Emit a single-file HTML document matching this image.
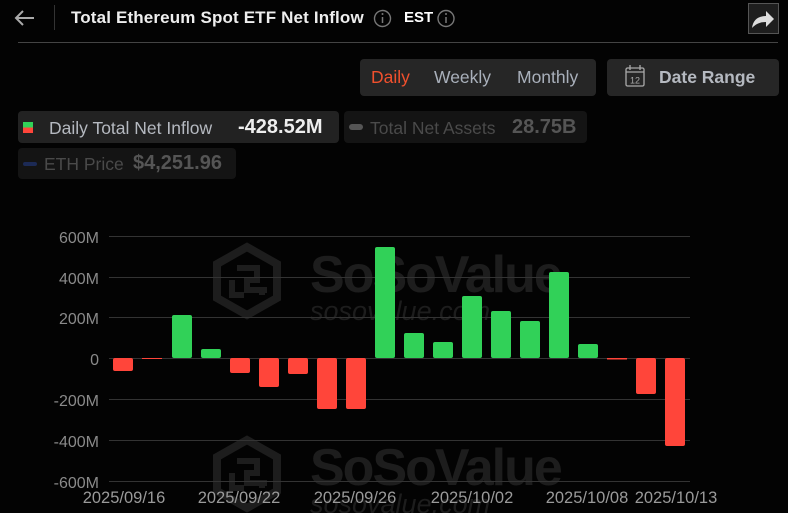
<!DOCTYPE html>
<html><head><meta charset="utf-8"><style>
*{margin:0;padding:0;box-sizing:border-box}
body{width:788px;height:513px;background:#030303;font-family:"Liberation Sans",sans-serif;position:relative;overflow:hidden;color:#ccc}
.a{position:absolute;white-space:nowrap}
</style></head><body>
<svg class="a" style="left:0;top:0" width="788" height="513">
<path d="M34 18H16M23 11l-7 7 7 7" stroke="#aaa" stroke-width="2" fill="none"/>
<line x1="54.5" y1="5" x2="54.5" y2="30" stroke="#333"/>
<circle cx="382.5" cy="18.5" r="8" stroke="#777" stroke-width="1.4" fill="none"/>
<line x1="382.5" y1="17" x2="382.5" y2="23" stroke="#777" stroke-width="1.5"/><circle cx="382.5" cy="14" r="1" fill="#777"/>
<circle cx="446" cy="18.5" r="8" stroke="#777" stroke-width="1.4" fill="none"/>
<line x1="446" y1="17" x2="446" y2="23" stroke="#777" stroke-width="1.5"/><circle cx="446" cy="14" r="1" fill="#777"/>
<rect x="748.5" y="3.5" width="30" height="30" fill="#1e1e1e" stroke="#555"/>
<path d="M752 28c1-8 6-12 14-12v-5l8 8-8 8v-5c-6 0-10 2-14 6z" fill="#ddd"/>
<line x1="18" y1="42.5" x2="778" y2="42.5" stroke="#444"/>
<rect x="360" y="59" width="236" height="37" rx="4" fill="#262626"/>
<rect x="607" y="59" width="172" height="37" rx="4" fill="#262626"/>
<rect x="626" y="68" width="18" height="18" rx="1.5" fill="none" stroke="#aaa" stroke-width="1.3"/>
<line x1="626" y1="72" x2="644" y2="72" stroke="#aaa" stroke-width="1.3"/>
<line x1="630" y1="65" x2="630" y2="70" stroke="#aaa" stroke-width="1.3"/><line x1="640" y1="65" x2="640" y2="70" stroke="#aaa" stroke-width="1.3"/>
<text x="635" y="83.5" font-size="9" fill="#aaa" text-anchor="middle" font-family="Liberation Sans">12</text>
<rect x="18" y="111" width="321" height="32" rx="4" fill="#222"/>
<rect x="23" y="122" width="10" height="5.5" fill="#31d158"/><rect x="23" y="127.5" width="10" height="5.5" fill="#ff453a"/>
<rect x="344" y="111" width="243" height="32" rx="4" fill="#141414"/>
<rect x="349" y="124" width="14" height="6" rx="3" fill="#555"/>
<rect x="18" y="148" width="218" height="31" rx="4" fill="#141414"/>
<rect x="23" y="162" width="14" height="4" rx="2" fill="#1c2a55"/>
<g fill="none" stroke="#1d1d1d" stroke-width="8">
<path d="M247 247l30 17v34l-30 17-30-17v-34z"/>
<path d="M247 440l30 17v34l-30 17-30-17v-34z"/>
</g>
<g fill="none" stroke="#1d1d1d" stroke-width="6">
<path d="M237 268h20v12h-10v10h20M232 280v15h12M262 295v-8"/>
<path d="M237 461h20v12h-10v10h20M232 473v15h12M262 488v-8"/>
</g>
<g font-family="Liberation Sans" fill="#1d1d1d">
<text x="310" y="292" font-size="52" font-weight="bold" letter-spacing="-2">SoSoValue</text>
<text x="310" y="320" font-size="27" font-style="italic">sosovalue.com</text>
<text x="310" y="485" font-size="52" font-weight="bold" letter-spacing="-2">SoSoValue</text>
<text x="310" y="513" font-size="27" font-style="italic">sosovalue.com</text>
</g>
<g stroke="#333" stroke-width="1">
<line x1="109" y1="236.5" x2="690" y2="236.5"/><line x1="109" y1="277.5" x2="690" y2="277.5"/>
<line x1="109" y1="317.5" x2="690" y2="317.5"/><line x1="109" y1="358.5" x2="690" y2="358.5"/>
<line x1="109" y1="399.5" x2="690" y2="399.5"/><line x1="109" y1="440.5" x2="690" y2="440.5"/>
<line x1="109" y1="481.5" x2="690" y2="481.5"/>
</g>
<g font-family="Liberation Sans" font-size="16" fill="#8a8a8a" text-anchor="end">
<text x="99" y="243">600M</text><text x="99" y="284">400M</text><text x="99" y="324">200M</text>
<text x="99" y="365">0</text><text x="99" y="406">-200M</text><text x="99" y="447">-400M</text><text x="99" y="488">-600M</text>
</g>
<g font-family="Liberation Sans" font-size="16.5" fill="#9a9a9a" text-anchor="middle">
<text x="124" y="503">2025/09/16</text><text x="239" y="503">2025/09/22</text><text x="355" y="503">2025/09/26</text>
<text x="472" y="503">2025/10/02</text><text x="587" y="503">2025/10/08</text><text x="676" y="503">2025/10/13</text>
</g>
<g fill="#31d158">
<rect x="172" y="315" width="20" height="43" rx="2"/>
<rect x="201" y="349" width="20" height="9" rx="2"/>
<rect x="375" y="247" width="20" height="111" rx="2"/>
<rect x="404" y="333" width="20" height="25" rx="2"/>
<rect x="433" y="342" width="20" height="16" rx="2"/>
<rect x="462" y="296" width="20" height="62" rx="2"/>
<rect x="491" y="311" width="20" height="47" rx="2"/>
<rect x="520" y="321" width="20" height="37" rx="2"/>
<rect x="549" y="272" width="20" height="86" rx="2"/>
<rect x="578" y="344" width="20" height="14" rx="2"/>
</g>
<g fill="#ff453a">
<rect x="113" y="358" width="20" height="13" rx="2"/>
<rect x="142" y="358" width="20" height="1"/>
<rect x="230" y="358" width="20" height="15" rx="2"/>
<rect x="259" y="358" width="20" height="29" rx="2"/>
<rect x="288" y="358" width="20" height="16" rx="2"/>
<rect x="317" y="358" width="20" height="51" rx="2"/>
<rect x="346" y="358" width="20" height="51" rx="2"/>
<rect x="607" y="358" width="20" height="1.5"/>
<rect x="636" y="358" width="20" height="36" rx="2"/>
<rect x="665" y="358" width="20" height="88" rx="2"/>
</g>
</svg>
<div class="a" style="left:71px;top:8px;font-size:17px;font-weight:bold;color:#eee;letter-spacing:0.15px">Total Ethereum Spot ETF Net Inflow</div>
<div class="a" style="left:404px;top:9px;font-size:15px;font-weight:bold;color:#fff">EST</div>
<div class="a" style="left:371px;top:67px;font-size:17.5px;color:#f0502d">Daily</div>
<div class="a" style="left:434px;top:67px;font-size:17.5px;color:#a9b0bb">Weekly</div>
<div class="a" style="left:517px;top:67px;font-size:17.5px;color:#a9b0bb">Monthly</div>
<div class="a" style="left:659px;top:67px;font-size:17.5px;font-weight:bold;color:#b5b9c0">Date Range</div>
<div class="a" style="left:49px;top:118px;font-size:17.5px;color:#b5b9c0">Daily Total Net Inflow</div>
<div class="a" style="left:238px;top:116px;font-size:20px;font-weight:bold;color:#eee">-428.52M</div>
<div class="a" style="left:370px;top:118px;font-size:17.5px;color:#4a4a4a">Total Net Assets</div>
<div class="a" style="left:512px;top:116px;font-size:20px;font-weight:bold;color:#555">28.75B</div>
<div class="a" style="left:44px;top:154px;font-size:17.5px;color:#4a4a4a">ETH Price</div>
<div class="a" style="left:133px;top:152px;font-size:20px;font-weight:bold;color:#555">$4,251.96</div>
</body></html>
